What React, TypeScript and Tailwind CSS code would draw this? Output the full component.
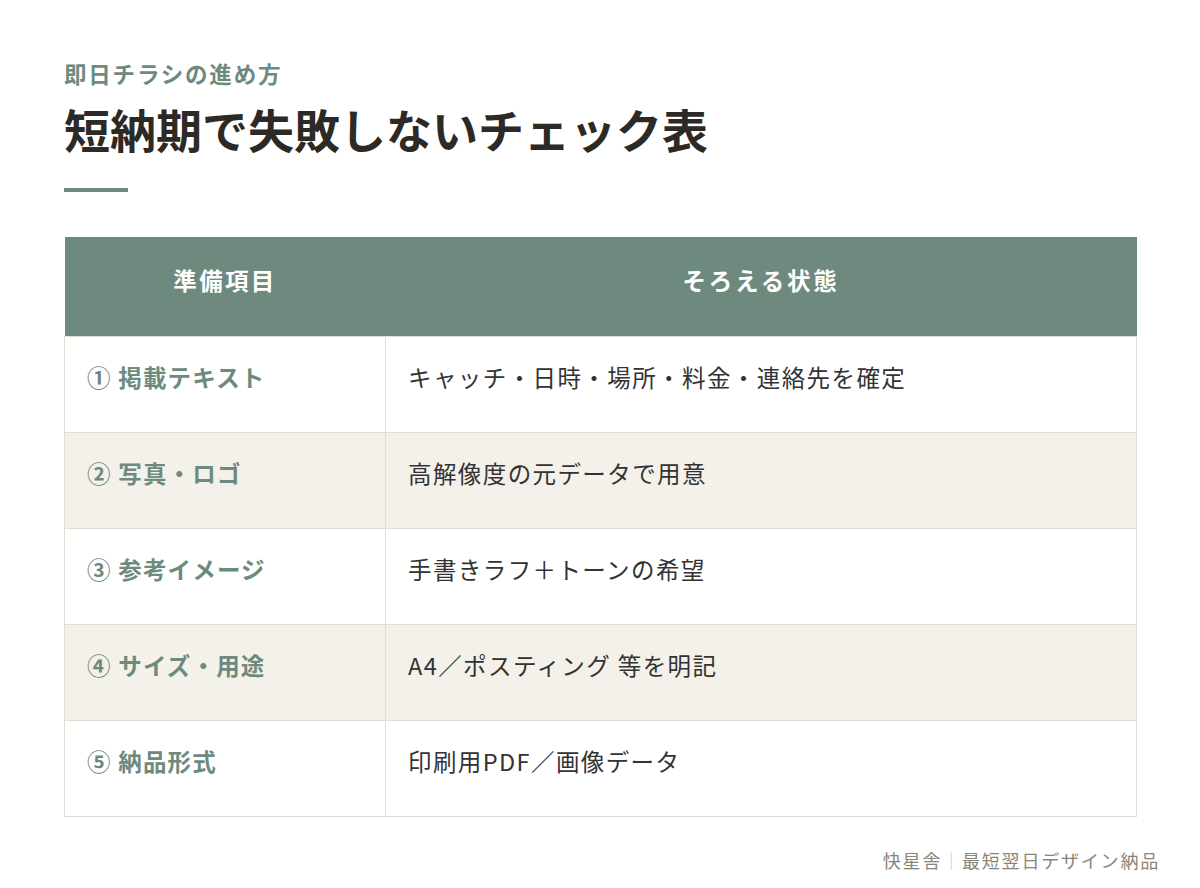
const rows = [
  { no: "①", item: "掲載テキスト", state: "キャッチ・日時・場所・料金・連絡先を確定" },
  { no: "②", item: "写真・ロゴ", state: "高解像度の元データで用意" },
  { no: "③", item: "参考イメージ", state: "手書きラフ＋トーンの希望" },
  { no: "④", item: "サイズ・用途", state: "A4／ポスティング 等を明記" },
  { no: "⑤", item: "納品形式", state: "印刷用PDF／画像データ" },
]

export default function App() {
  return (
    <div
      className="w-[1200px] h-[888px] bg-white pl-16 pr-[63px] pt-[58px]"
      style={{ fontFamily: '"Noto Sans CJK JP", "Noto Sans", sans-serif' }}
    >
      <p className="text-[22.5px] leading-[30px] font-bold tracking-[0.08em] text-[#6e8a7e]">即日チラシの進め方</p>
      <h1 className="mt-[10px] text-[46px] leading-[60px] font-bold text-[#2d2a26]">短納期で失敗しないチェック表</h1>
      <div className="mt-[30px] h-1 w-16 bg-[#6e8a7e]" />

      <table className="mt-[45px] w-full border-collapse">
        <thead>
          <tr className="bg-[#6e8a7e] text-white">
            <th className="w-[321px] h-[99px] pb-[12px] text-[23.5px] font-bold tracking-[0.1em]">準備項目</th>
            <th className="h-[99px] pb-[12px] text-[23.5px] font-bold tracking-[0.12em]">そろえる状態</th>
          </tr>
        </thead>
        <tbody>
          {rows.map((r, i) => (
            <tr key={r.no} className={i % 2 === 1 ? "bg-[#f4f1ea]" : "bg-white"}>
              <td className="h-[96px] pl-[22px] pb-[12px] border border-[#e2ddd3] text-[23.5px] font-bold tracking-[0.05em] text-[#6e8a7e]">
                {r.no} {r.item}
              </td>
              <td className="h-[96px] pl-[22px] pb-[12px] border border-[#e2ddd3] text-[23.5px] tracking-[0.06em] text-[#333]">
                {r.state}
              </td>
            </tr>
          ))}
        </tbody>
      </table>

      <div className="mt-[30px] -mr-[23px] flex justify-end text-[18px] tracking-[0.1em] text-[#8a8578]">
        <span>快星舎</span>
        <span className="text-[#cfcac0]">｜</span>
        <span>最短翌日デザイン納品</span>
      </div>
    </div>
  )
}
